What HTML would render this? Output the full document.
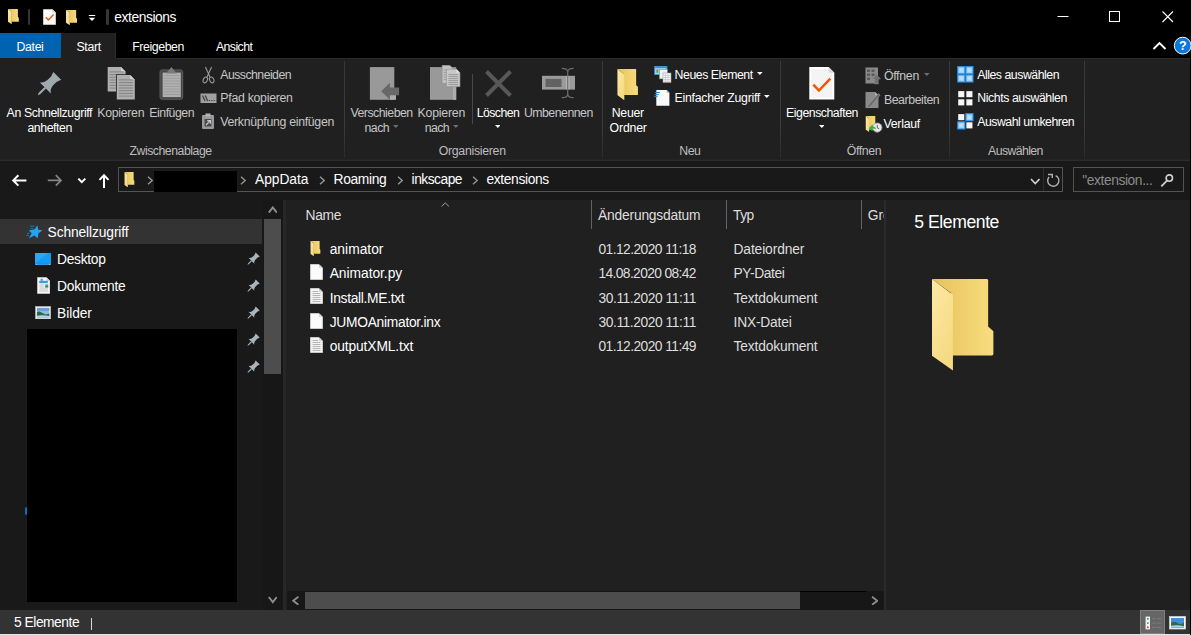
<!DOCTYPE html>
<html lang="de"><head><meta charset="utf-8"><title>extensions</title><style>
html,body{margin:0;padding:0;background:#000}
body{width:1191px;height:635px;position:relative;overflow:hidden;font-family:"Liberation Sans",sans-serif}
.b{position:absolute;display:block}
.t{position:absolute;white-space:nowrap;display:block}
</style></head><body>
<svg width="0" height="0" style="position:absolute"><defs>
<linearGradient id="fb" x1="0" y1="0" x2="1" y2="0"><stop offset="0" stop-color="#e6c35a"/><stop offset="1" stop-color="#f8dc7e"/></linearGradient>
<linearGradient id="ff" x1="0" y1="0" x2="0.6" y2="1"><stop offset="0" stop-color="#fde9a6"/><stop offset="1" stop-color="#f6da82"/></linearGradient>
<symbol id="folder" viewBox="0 0 62 93"><path d="M0,0H54.3Q55.8,0 55.8,1.5V47.8L61,52.6V75.3Q61,76.8 59.5,76.8H19V14Z" fill="url(#fb)"/><path d="M0,0L20.8,15.7V91.9L0,77.1Z" fill="url(#ff)"/></symbol>
<symbol id="pin" viewBox="-14 -14 28 28"><g transform="rotate(45)"><path d="M-5.3,-13.3H5.3L3.7,-8.6V-4Q4,1 7.7,3.1H-7.7Q-4,1 -3.7,-4V-8.6Z"/><path d="M-1,3H1V11L0,13.3L-1,11Z"/></g></symbol>
<symbol id="page" viewBox="0 0 13 16"><path d="M0.5,0.5H9L12.5,4V15.5H0.5Z" fill="#fbfbfb" stroke="#c9c9c9" stroke-width="1"/><path d="M9,0.5V4H12.5Z" fill="#d9d9d9"/></symbol>
<symbol id="txt" viewBox="0 0 13 16"><path d="M0.5,0.5H9L12.5,4V15.5H0.5Z" fill="#f4f4f4" stroke="#c9c9c9" stroke-width="1"/><path d="M9,0.5V4H12.5Z" fill="#cfcfcf"/><path d="M2.5,3.5H8M2.5,5.5H10.5M2.5,7.5H10.5M2.5,9.5H10.5M2.5,11.5H10.5M2.5,13.5H10.5" stroke="#b4b4b4" stroke-width="1"/></symbol>
</defs></svg>
<div class="b" style="left:0px;top:0px;width:1191px;height:58px;background:#000;"></div>
<div class="b" style="left:0px;top:33px;width:61px;height:25px;background:#0063b1;"></div>
<div class="b" style="left:61px;top:33px;width:55px;height:25px;background:#202020;"></div>
<div class="b" style="left:0px;top:58px;width:1190px;height:102px;background:#202020;"></div>
<div class="b" style="left:116px;top:58px;width:1074px;height:1px;background:#2b2b2b;"></div>
<div class="b" style="left:115px;top:33px;width:1px;height:25px;background:#2b2b2b;"></div>
<div class="b" style="left:0px;top:159px;width:1190px;height:1px;background:#242424;"></div>
<div class="b" style="left:0px;top:160px;width:1190px;height:1px;background:#2b2b2b;"></div>
<div class="b" style="left:0px;top:161px;width:1190px;height:39px;background:#191919;"></div>
<div class="b" style="left:0px;top:200px;width:284px;height:410px;background:#191919;"></div>
<div class="b" style="left:263px;top:200px;width:20px;height:410px;background:#171717;"></div>
<div class="b" style="left:283px;top:200px;width:3px;height:410px;background:#272727;"></div>
<div class="b" style="left:286px;top:200px;width:598px;height:410px;background:#202020;"></div>
<div class="b" style="left:286.5px;top:591px;width:597.5px;height:19px;background:#171717;"></div>
<div class="b" style="left:884px;top:200px;width:2px;height:410px;background:#2a2a2a;"></div>
<div class="b" style="left:886px;top:200px;width:304px;height:410px;background:#202020;"></div>
<div class="b" style="left:0px;top:610px;width:1190px;height:24px;background:#333;"></div>
<div class="b" style="left:0px;top:634px;width:1190px;height:1px;background:#e6e6e6;"></div>
<div class="b" style="left:1190px;top:0px;width:1px;height:635px;background:#000;"></div>
<svg class="b" style="left:8px;top:8.9px;" width="11" height="15.4" viewBox="0 0 62 93" preserveAspectRatio="none"><use href="#folder"/></svg>
<div class="b" style="left:27.9px;top:9px;width:2.6px;height:16px;background:#363636;border-radius:1.3px"></div>
<svg class="b" style="left:43px;top:9px;" width="13" height="16" viewBox="0 0 13 16"><path d="M0.2,0.2H9.4L12.8,3.6V15.7H0.2Z" fill="#fcfcfc"/><path d="M9.4,0.2V3.6H12.8Z" fill="#cfcfcf"/><path d="M2.8,8.3L5.4,11L10.6,5.6" fill="none" stroke="#f25500" stroke-width="1.4"/></svg>
<svg class="b" style="left:66px;top:9.8px;" width="11.3" height="15.4" viewBox="0 0 62 93" preserveAspectRatio="none"><use href="#folder"/></svg>
<svg class="b" style="left:88px;top:14px;" width="8" height="8" viewBox="0 0 8 8"><path d="M0.8,1.5H7.2" stroke="#fff" stroke-width="1"/><path d="M0.8,3.8H7.2L4,7Z" fill="#fff"/></svg>
<div class="b" style="left:106.2px;top:9px;width:2.6px;height:16px;background:#363636;border-radius:1.3px"></div>
<svg class="b" style="left:1056px;top:9.5px;" width="14" height="14" viewBox="0 0 14 14"><path d="M1.5,6.5H12.5" stroke="#fff" stroke-width="1"/></svg>
<svg class="b" style="left:1108px;top:9.5px;" width="14" height="14" viewBox="0 0 14 14"><rect x="1.5" y="1.5" width="10" height="10" fill="none" stroke="#fff" stroke-width="1"/></svg>
<svg class="b" style="left:1161px;top:9.5px;" width="14" height="14" viewBox="0 0 14 14"><path d="M1.5,1.5L12,12M12,1.5L1.5,12" stroke="#fff" stroke-width="1.1"/></svg>
<svg class="b" style="left:1152px;top:41px;" width="15" height="10" viewBox="0 0 15 10"><path d="M1.5,8L7.5,2L13.5,8" fill="none" stroke="#fff" stroke-width="1.9"/></svg>
<svg class="b" style="left:1173px;top:36px;" width="18" height="20" viewBox="0 0 18 20"><circle cx="9.7" cy="9.6" r="8.4" fill="#0b79dc" stroke="#fff" stroke-width="1"/><text x="9.7" y="14.2" text-anchor="middle" font-family="Liberation Sans, sans-serif" font-weight="bold" font-size="12.5" fill="#fff">?</text></svg>
<div class="b" style="left:344px;top:61px;width:1px;height:97px;background:linear-gradient(#383838 0%,#3c3c3c 70%,#2a2a2a 100%);"></div>
<div class="b" style="left:602px;top:61px;width:1px;height:97px;background:linear-gradient(#383838 0%,#3c3c3c 70%,#2a2a2a 100%);"></div>
<div class="b" style="left:780px;top:61px;width:1px;height:97px;background:linear-gradient(#383838 0%,#3c3c3c 70%,#2a2a2a 100%);"></div>
<div class="b" style="left:949px;top:61px;width:1px;height:97px;background:linear-gradient(#383838 0%,#3c3c3c 70%,#2a2a2a 100%);"></div>
<div class="b" style="left:1084px;top:61px;width:1px;height:97px;background:linear-gradient(#383838 0%,#3c3c3c 70%,#2a2a2a 100%);"></div>
<div class="b" style="left:472px;top:74px;width:1px;height:50px;background:#484848;"></div>
<svg class="b" style="left:32.8px;top:70.9px;" width="29" height="29" viewBox="0 0 28 28"><use href="#pin" fill="#9fa9b0"/></svg>
<svg class="b" style="left:107px;top:67px;" width="28" height="33" viewBox="0 0 28 33"><path d="M0.7,0.1H13.999999999999998L18.599999999999998,4.699999999999999V24.5H0.7Z" fill="#b0b0b0"/><path d="M13.999999999999998,0.1V4.699999999999999H18.599999999999998Z" fill="#d2d2d2"/><path d="M2.7,4.9H16.599999999999998M2.7,7.6H16.599999999999998M2.7,10.3H16.599999999999998M2.7,13.0H16.599999999999998M2.7,15.7H16.599999999999998M2.7,18.4H16.599999999999998M2.7,21.1H16.599999999999998" stroke="#7c7c7c" stroke-width="0.9"/><path d="M9,7.3H28V33H9Z" fill="#202020"/><path d="M9.8,8.1H23.200000000000003L27.8,12.7V32.5H9.8Z" fill="#b0b0b0"/><path d="M23.200000000000003,8.1V12.7H27.8Z" fill="#d2d2d2"/><path d="M11.8,12.9H25.8M11.8,15.6H25.8M11.8,18.3H25.8M11.8,21.0H25.8M11.8,23.7H25.8M11.8,26.4H25.8M11.8,29.1H25.8" stroke="#7c7c7c" stroke-width="0.9"/></svg>
<svg class="b" style="left:159px;top:66px;" width="25" height="35" viewBox="0 0 25 35"><rect x="1" y="3.9" width="22.7" height="29.4" rx="2" fill="#474747" stroke="#5c5c5c"/><rect x="3.6" y="6.6" width="18.2" height="24.5" fill="#b0b0b0"/><path d="M6.8,7.6L10.4,3.6L12.4,1.1L14.4,3.6L18,7.6Z" fill="#7a7a7a"/><path d="M4.6,9.6H20.8M4.6,12.3H20.8M4.6,15.0H20.8M4.6,17.7H20.8M4.6,20.4H20.8M4.6,23.1H20.8M4.6,25.8H20.8M4.6,28.5H20.8" stroke="#9a9a9a" stroke-width="0.9"/></svg>
<svg class="b" style="left:202px;top:66px;" width="13" height="18" viewBox="0 0 13 18"><path d="M3.4,0.9L8.1,11.2M9.6,0.9L4.9,11.2" stroke="#9a9a9a" stroke-width="1.1" fill="none"/><ellipse cx="3.3" cy="13.9" rx="2" ry="3" transform="rotate(24 3.3 13.9)" fill="none" stroke="#9a9a9a" stroke-width="1.1"/><ellipse cx="9.7" cy="13.9" rx="2" ry="3" transform="rotate(-24 9.7 13.9)" fill="none" stroke="#9a9a9a" stroke-width="1.1"/></svg>
<svg class="b" style="left:200px;top:93px;" width="17" height="11" viewBox="0 0 17 11"><rect x="0.5" y="0.5" width="16" height="9.5" fill="#a0a0a0"/><path d="M2.5,2.5L5,8M5.2,2.5L7.7,8" stroke="#3c3c3c" stroke-width="1.2"/><path d="M8.8,7.5H10M11.2,7.5H12.4M13.6,7.5H14.8" stroke="#3c3c3c" stroke-width="1.2"/></svg>
<svg class="b" style="left:201px;top:113px;" width="14" height="17" viewBox="0 0 14 17"><rect x="1" y="2" width="12" height="14" rx="1" fill="#9a9a9a"/><rect x="4.5" y="0.5" width="5" height="3" fill="#b5b5b5"/><rect x="3.5" y="6" width="7" height="7.5" fill="#4a4a4a"/><path d="M5,12L8.8,8.2M6.2,7.6H9.4V10.8" stroke="#c8c8c8" stroke-width="1.2" fill="none"/></svg>
<svg class="b" style="left:369px;top:66px;" width="31" height="35" viewBox="0 0 31 35"><rect x="0.9" y="1.1" width="24.4" height="32.7" fill="#999"/><rect x="21" y="29" width="6" height="4.8" fill="#ababab"/><path d="M12.2,25.2L20.9,16.7V21.4H30.1V29.3H20.9V33.8Z" fill="#686868"/></svg>
<svg class="b" style="left:429px;top:65px;" width="32" height="36" viewBox="0 0 32 36"><rect x="1" y="2.1" width="26.2" height="32.7" fill="#999"/><rect x="24" y="22" width="3.2" height="12.8" fill="#adadad"/><path d="M13.1,0.2H20.7L23.7,3.2V18.4H13.1Z" fill="#c4c4c4" stroke="#8a8a8a" stroke-width="0.6"/><path d="M14.6,5H17M14.6,7.4H17M14.6,9.8H17M14.6,12.2H17M14.6,14.6H17" stroke="#909090" stroke-width="0.8"/><path d="M17.4,4.1H27.3L31,7.8V21.7H17.4Z" fill="#c8c8c8" stroke="#8a8a8a" stroke-width="0.6"/><path d="M27.3,4.1V7.8H31Z" fill="#e0e0e0"/><path d="M19.4,9.6H29M19.4,11.6H29M19.4,13.6H29M19.4,15.6H29M19.4,17.6H29M19.4,19.6H29" stroke="#8c8c8c" stroke-width="0.8"/></svg>
<svg class="b" style="left:484px;top:69px;" width="29" height="29" viewBox="0 0 29 29"><path d="M2.5,2.5L26.5,26.5M26.5,2.5L2.5,26.5" stroke="#585858" stroke-width="4"/></svg>
<svg class="b" style="left:541px;top:67px;" width="35" height="32" viewBox="0 0 35 32"><rect x="1" y="8.8" width="33" height="13.8" fill="#9a9a9a"/><rect x="4.5" y="11.9" width="16" height="8.1" fill="#626262"/><path d="M26.7,9V22.4" stroke="#b4b4b4" stroke-width="3.6"/><path d="M20.8,1.3Q26.7,1.3 26.7,5Q26.7,1.3 32.6,1.3M20.8,30.7Q26.7,30.7 26.7,27Q26.7,30.7 32.6,30.7" fill="none" stroke="#6c6c6c" stroke-width="1.2"/><path d="M26.7,4.5V27.5" stroke="#6c6c6c" stroke-width="1.2"/></svg>
<svg class="b" style="left:616.5px;top:69px;" width="21.5" height="31.5" viewBox="0 0 62 93"><use href="#folder"/></svg>
<svg class="b" style="left:654px;top:66px;" width="18" height="18" viewBox="0 0 18 18"><rect x="0.7" y="0.3" width="12.2" height="8.3" fill="#a5d3f8" stroke="#4a92dc" stroke-width="0.8"/><rect x="0.7" y="0.3" width="12.2" height="1.8" fill="#3f8de0"/><rect x="2.4" y="4" width="1.8" height="2.8" fill="#4da04a"/><rect x="2.4" y="3" width="1.8" height="1.2" fill="#e8953a"/><rect x="5.4" y="3.4" width="7.9" height="9.5" fill="#f3f3f3" stroke="#8a8a8a" stroke-width="0.6"/><rect x="9" y="7" width="8" height="9.4" fill="#fff" stroke="#9a9a9a" stroke-width="0.6"/><path d="M9.6,9.4H16.4M9.6,11.4H16.4M9.6,13.4H16.4M9.6,15.2H16.4" stroke="#f0a3ab" stroke-width="0.7"/><path d="M11.4,8V16M14,8V16" stroke="#a9cbf2" stroke-width="0.8"/></svg>
<svg class="b" style="left:653px;top:89px;" width="18" height="18" viewBox="0 0 18 18"><path d="M3.3,0.9H13.6L16.4,3.7V16.8H3.3Z" fill="#fafafa"/><path d="M13.6,0.9V3.7H16.4Z" fill="#b8b8b8"/><path d="M2.2,3.5H6.8M1.6,5.4H5.8M1,7.3H4.8" stroke="#2a86d8" stroke-width="1"/></svg>
<svg class="b" style="left:809px;top:66px;" width="26" height="34" viewBox="0 0 26 34"><path d="M0.3,0.9H19.6L25.3,6.8V33.6H0.3Z" fill="#fff"/><path d="M2.2,3H18.6L23.4,7.8V31.6H2.2Z" fill="#f4f4f5"/><path d="M19.6,0.9V6.8H25.3Z" fill="#d8d8d8"/><path d="M4.3,18.6L9.9,24.5L21.3,12.7" fill="none" stroke="#f25500" stroke-width="2.5"/></svg>
<svg class="b" style="left:865px;top:67px;" width="16" height="18" viewBox="0 0 16 18"><rect x="0.5" y="0.5" width="12.5" height="16" fill="#8a8a8a"/><path d="M2,2.5H5V5H2ZM2,6.5H5V9H2ZM2,10.5H5V13H2ZM6.5,2.5H9.5V5H6.5ZM6.5,6.5H9.5V9H6.5Z" fill="#5a5a5a"/><path d="M11.5,7.5L15.5,12H13.3V17H9.7V12H7.5Z" fill="#707070" stroke="#8a8a8a" stroke-width="0.5"/></svg>
<svg class="b" style="left:865px;top:91px;" width="16" height="18" viewBox="0 0 16 18"><path d="M0.5,1H10L13.5,4.5V17H0.5Z" fill="#8a8a8a"/><path d="M10,1V4.5H13.5Z" fill="#b0b0b0"/><path d="M3,14.5L13.5,2.5L15.2,4L5,16L2.6,16.8Z" fill="#6a6a6a" stroke="#9a9a9a" stroke-width="0.5"/></svg>
<svg class="b" style="left:865px;top:115px;" width="18" height="19" viewBox="0 0 18 19"><g transform="translate(0.5,1) scale(0.175)"><use href="#folder" width="62" height="93"/></g><circle cx="12.3" cy="12.6" r="4.6" fill="#e9e9e9" stroke="#9a9a9a" stroke-width="0.8"/><path d="M12.3,10V12.8L14.2,13.8" fill="none" stroke="#555" stroke-width="0.9"/><path d="M3.6,13.2L7.6,9.4V11.4Q10.5,11.4 11.2,14.2Q9.8,13.4 7.6,13.6V16.2Z" fill="#32b24a"/></svg>
<svg class="b" style="left:957px;top:66px;" width="17" height="17" viewBox="0 0 17 17"><rect x="0.20" y="0.10" width="8.15" height="8.2" fill="#2f97f1"/><rect x="1.40" y="1.30" width="5.75" height="5.8" fill="#a3d3fb"/><rect x="2.60" y="2.50" width="3.3" height="3.3" fill="#b9defd"/><rect x="8.35" y="0.10" width="8.15" height="8.2" fill="#2f97f1"/><rect x="9.55" y="1.30" width="5.75" height="5.8" fill="#a3d3fb"/><rect x="10.75" y="2.50" width="3.3" height="3.3" fill="#b9defd"/><rect x="0.20" y="8.30" width="8.15" height="8.2" fill="#2f97f1"/><rect x="1.40" y="9.50" width="5.75" height="5.8" fill="#a3d3fb"/><rect x="2.60" y="10.70" width="3.3" height="3.3" fill="#b9defd"/><rect x="8.35" y="8.30" width="8.15" height="8.2" fill="#2f97f1"/><rect x="9.55" y="9.50" width="5.75" height="5.8" fill="#a3d3fb"/><rect x="10.75" y="10.70" width="3.3" height="3.3" fill="#b9defd"/></svg>
<svg class="b" style="left:957px;top:89.9px;" width="17" height="17" viewBox="0 0 17 17"><rect x="1.20" y="1.10" width="6.1" height="6.1" fill="#f6f6f6"/><rect x="9.35" y="1.10" width="6.1" height="6.1" fill="#f6f6f6"/><rect x="1.20" y="9.30" width="6.1" height="6.1" fill="#f6f6f6"/><rect x="9.35" y="9.30" width="6.1" height="6.1" fill="#f6f6f6"/></svg>
<svg class="b" style="left:957px;top:113.1px;" width="17" height="17" viewBox="0 0 17 17"><rect x="1.20" y="1.10" width="6.1" height="6.1" fill="#f6f6f6"/><rect x="8.35" y="0.10" width="8.15" height="8.2" fill="#2f97f1"/><rect x="9.55" y="1.30" width="5.75" height="5.8" fill="#a3d3fb"/><rect x="10.75" y="2.50" width="3.3" height="3.3" fill="#b9defd"/><rect x="0.20" y="8.30" width="8.15" height="8.2" fill="#2f97f1"/><rect x="1.40" y="9.50" width="5.75" height="5.8" fill="#a3d3fb"/><rect x="2.60" y="10.70" width="3.3" height="3.3" fill="#b9defd"/><rect x="9.35" y="9.30" width="6.1" height="6.1" fill="#f6f6f6"/></svg>
<svg class="b" style="left:392.5px;top:124.6px;" width="5.6" height="3" viewBox="0 0 5.6 3"><path d="M0,0H5.6L2.8,3Z" fill="#6e6e6e"/></svg>
<svg class="b" style="left:452.6px;top:124.6px;" width="5.6" height="3" viewBox="0 0 5.6 3"><path d="M0,0H5.6L2.8,3Z" fill="#6e6e6e"/></svg>
<svg class="b" style="left:494.6px;top:124.6px;" width="5.6" height="3" viewBox="0 0 5.6 3"><path d="M0,0H5.6L2.8,3Z" fill="#fff"/></svg>
<svg class="b" style="left:818.8px;top:124.6px;" width="5.6" height="3" viewBox="0 0 5.6 3"><path d="M0,0H5.6L2.8,3Z" fill="#fff"/></svg>
<svg class="b" style="left:757px;top:72px;" width="5.6" height="3" viewBox="0 0 5.6 3"><path d="M0,0H5.6L2.8,3Z" fill="#fff"/></svg>
<svg class="b" style="left:764.3px;top:95.3px;" width="5.6" height="3" viewBox="0 0 5.6 3"><path d="M0,0H5.6L2.8,3Z" fill="#fff"/></svg>
<svg class="b" style="left:924px;top:73.2px;" width="5.6" height="3" viewBox="0 0 5.6 3"><path d="M0,0H5.6L2.8,3Z" fill="#6e6e6e"/></svg>
<svg class="b" style="left:11px;top:174px;" width="16" height="13" viewBox="0 0 16 13"><path d="M2,6.4H15.4M7.4,1.2L2.2,6.4L7.4,11.6" fill="none" stroke="#fff" stroke-width="2"/></svg>
<svg class="b" style="left:46.5px;top:174px;" width="16" height="13" viewBox="0 0 16 13"><path d="M0.8,6.4H14M8.8,1.2L14,6.4L8.8,11.6" fill="none" stroke="#858585" stroke-width="1.7"/></svg>
<svg class="b" style="left:76.5px;top:177px;" width="10" height="7" viewBox="0 0 10 7"><path d="M1.3,1.6L4.8,5.1L8.3,1.6" fill="none" stroke="#fff" stroke-width="2"/></svg>
<svg class="b" style="left:98px;top:173px;" width="13" height="16" viewBox="0 0 13 16"><path d="M6,15V2.4M1.5,6.9L6,2.3L10.5,6.9" fill="none" stroke="#fff" stroke-width="2"/></svg>
<div class="b" style="left:118px;top:167px;width:943px;height:23px;border:1px solid #535353;background:#191919"></div>
<div class="b" style="left:1043px;top:168px;width:1px;height:23px;background:#2e2e2e;"></div>
<svg class="b" style="left:124px;top:171.5px;" width="11" height="15.5" viewBox="0 0 62 93"><use href="#folder"/></svg>
<svg class="b" style="left:146.5px;top:175.5px;" width="6.5" height="9" viewBox="0 0 6.5 9"><path d="M1,0.8L5.2,4.5L1,8.2" fill="none" stroke="#9a9a9a" stroke-width="1.3"/></svg>
<svg class="b" style="left:240px;top:175.5px;" width="6.5" height="9" viewBox="0 0 6.5 9"><path d="M1,0.8L5.2,4.5L1,8.2" fill="none" stroke="#9a9a9a" stroke-width="1.3"/></svg>
<svg class="b" style="left:318.5px;top:175.5px;" width="6.5" height="9" viewBox="0 0 6.5 9"><path d="M1,0.8L5.2,4.5L1,8.2" fill="none" stroke="#9a9a9a" stroke-width="1.3"/></svg>
<svg class="b" style="left:396.5px;top:175.5px;" width="6.5" height="9" viewBox="0 0 6.5 9"><path d="M1,0.8L5.2,4.5L1,8.2" fill="none" stroke="#9a9a9a" stroke-width="1.3"/></svg>
<svg class="b" style="left:472px;top:175.5px;" width="6.5" height="9" viewBox="0 0 6.5 9"><path d="M1,0.8L5.2,4.5L1,8.2" fill="none" stroke="#9a9a9a" stroke-width="1.3"/></svg>
<div class="b" style="left:154px;top:171px;width:83px;height:21px;background:#000;"></div>
<svg class="b" style="left:1029.5px;top:177.5px;" width="10.5" height="7.5" viewBox="0 0 10.5 7.5"><path d="M1,1L5.2,5.6L9.5,1" fill="none" stroke="#d0d0d0" stroke-width="1.6"/></svg>
<svg class="b" style="left:1046px;top:173px;" width="15" height="15" viewBox="0 0 15 15"><path d="M9.67,2.52A5.6,5.6 0 1 1 3.01,4" fill="none" stroke="#b0b0b0" stroke-width="1.4"/><path d="M2,1.5H6.3V5" fill="none" stroke="#b0b0b0" stroke-width="1.4"/></svg>
<div class="b" style="left:1073px;top:167px;width:109px;height:23px;border:1px solid #535353;background:#191919"></div>
<svg class="b" style="left:1160px;top:174px;" width="14" height="14" viewBox="0 0 14 14"><circle cx="9.3" cy="4.1" r="3.2" fill="none" stroke="#d0d0d0" stroke-width="1.6"/><path d="M7,6.6L1.3,12.4" stroke="#d0d0d0" stroke-width="1.8"/></svg>
<div class="b" style="left:0px;top:219px;width:262.4px;height:25px;background:#333;"></div>
<svg class="b" style="left:26px;top:224px;" width="18" height="16" viewBox="0 0 18 16"><path d="M11.4,1.3L12.3,5.7L16.5,6.3L12.5,9.2L11.6,14.3L8.3,11.6L2.8,14.5L5.7,9.2L2.8,6.6L8.6,5.2Z" fill="#22a4f4"/><path d="M4.1,2.2H8.6M4.4,4.4H7.2M1,9.4H3.5M0.2,11.4H2.8" stroke="#1a7fc4" stroke-width="0.9"/></svg>
<svg class="b" style="left:35px;top:253px;" width="16.2" height="12.4" viewBox="0 0 16.2 12.4"><rect x="0" y="0" width="16.2" height="12.2" fill="#149cf2"/><path d="M0,10V0H13Z" fill="#3db0f8" opacity="0.55"/><rect x="0" y="10" width="16.2" height="2.2" fill="#0f86dc"/><path d="M0.8,11.2H2.4M13.6,11.2H15.4" stroke="#cfeafd" stroke-width="0.8"/><path d="M3,11.2H13" stroke="#5cb6f2" stroke-width="0.6"/></svg>
<svg class="b" style="left:36.5px;top:277px;" width="13.5" height="17" viewBox="0 0 13.5 17"><path d="M0.5,0.5H9.5L13,4V16.5H0.5Z" fill="#f7f7f7" stroke="#bdbdbd" stroke-width="0.9"/><path d="M9.5,0.5V4H13Z" fill="#cfcfcf"/><rect x="2.2" y="3.8" width="8.6" height="2.4" fill="#3b9be8"/><rect x="3.6" y="1.8" width="2.2" height="2" fill="#3b9be8"/><path d="M2.3,8H7.4M2.3,10H7.4M2.3,12H11M2.3,14H11" stroke="#b4b4b4" stroke-width="0.8"/><rect x="8.2" y="7.4" width="3" height="3" fill="#5b93c9"/><path d="M8.2,10.4V9.2L9.6,8.4L11.2,9.4V10.4Z" fill="#4c8a55"/></svg>
<svg class="b" style="left:35px;top:305.5px;" width="16.2" height="13.4" viewBox="0 0 16.2 13.4"><rect x="0.4" y="0.4" width="15.4" height="12.6" fill="#fafafa" stroke="#a8a8a8" stroke-width="0.8"/><rect x="1.9" y="1.9" width="12.4" height="9.4" fill="#8fb9e4"/><rect x="1.9" y="1.9" width="12.4" height="3" fill="#6d9fd6"/><path d="M1.9,11.3V6.2Q4,4.6 6.6,6.6T11,8.4L14.3,7.6V11.3Z" fill="#2f6848"/><path d="M1.9,11.3V9.8Q7,8.4 14.3,10V11.3Z" fill="#b4d4e8"/></svg>
<div class="b" style="left:27px;top:329px;width:210px;height:273px;background:#000;"></div>
<div class="b" style="left:25px;top:507px;width:2px;height:8px;background:#0a6fd0;border-radius:2px 0 0 2px"></div>
<svg class="b" style="left:245.4px;top:252.2px;" width="15.2" height="15.2" viewBox="0 0 28 28"><use href="#pin" fill="#a9b3ba"/></svg>
<svg class="b" style="left:245.4px;top:279.2px;" width="15.2" height="15.2" viewBox="0 0 28 28"><use href="#pin" fill="#a9b3ba"/></svg>
<svg class="b" style="left:245.4px;top:306.2px;" width="15.2" height="15.2" viewBox="0 0 28 28"><use href="#pin" fill="#a9b3ba"/></svg>
<svg class="b" style="left:245.4px;top:333.2px;" width="15.2" height="15.2" viewBox="0 0 28 28"><use href="#pin" fill="#a9b3ba"/></svg>
<svg class="b" style="left:245.4px;top:360.2px;" width="15.2" height="15.2" viewBox="0 0 28 28"><use href="#pin" fill="#a9b3ba"/></svg>
<div class="b" style="left:264px;top:219px;width:17.2px;height:155px;background:#4d4d4d;"></div>
<svg class="b" style="left:267.7px;top:206px;" width="9.6" height="7.5" viewBox="0 0 9.6 7.5"><path d="M0.8,6.6L4.8,1.4L8.8,6.6" fill="none" stroke="#8c8c8c" stroke-width="1.9"/></svg>
<svg class="b" style="left:267.7px;top:596.4px;" width="9.6" height="7.5" viewBox="0 0 9.6 7.5"><path d="M0.8,1L4.8,6.2L8.8,1" fill="none" stroke="#8c8c8c" stroke-width="1.9"/></svg>
<div class="b" style="left:591px;top:200px;width:1px;height:29px;background:#636363;"></div>
<div class="b" style="left:726px;top:200px;width:1px;height:29px;background:#636363;"></div>
<div class="b" style="left:861px;top:200px;width:1px;height:29px;background:#636363;"></div>
<svg class="b" style="left:441px;top:201.5px;" width="8.5" height="5" viewBox="0 0 8.5 5"><path d="M0.6,4.4L4.25,0.9L7.9,4.4" fill="none" stroke="#a0a0a0" stroke-width="1"/></svg>
<div class="b" style="left:862px;top:205px;width:22px;height:22px;overflow:hidden"><span class="t" style="left:5.7px;top:3px;font-size:13.8px;line-height:15px;color:#dedede">Größe</span></div>
<svg class="b" style="left:310px;top:241px;" width="11" height="15.5" viewBox="0 0 62 93"><use href="#folder"/></svg>
<svg class="b" style="left:310px;top:264px;" width="13" height="16" viewBox="0 0 13 16"><use href="#page"/></svg>
<svg class="b" style="left:310px;top:288.3px;" width="13" height="16" viewBox="0 0 13 16"><use href="#txt"/></svg>
<svg class="b" style="left:310px;top:312.7px;" width="13" height="16" viewBox="0 0 13 16"><use href="#page"/></svg>
<svg class="b" style="left:310px;top:337px;" width="13" height="16" viewBox="0 0 13 16"><use href="#txt"/></svg>
<div class="b" style="left:305px;top:592px;width:494.5px;height:16.6px;background:#4d4d4d;"></div>
<div class="b" style="left:799.5px;top:591px;width:66px;height:1px;background:#000;"></div>
<svg class="b" style="left:291.9px;top:595.5px;" width="7.5" height="9.6" viewBox="0 0 7.5 9.6"><path d="M6.4,0.8L1.2,4.8L6.4,8.8" fill="none" stroke="#8c8c8c" stroke-width="1.9"/></svg>
<svg class="b" style="left:870.5px;top:595.5px;" width="7.5" height="9.6" viewBox="0 0 7.5 9.6"><path d="M1.1,0.8L6.3,4.8L1.1,8.8" fill="none" stroke="#8c8c8c" stroke-width="1.9"/></svg>
<svg class="b" style="left:932px;top:278.6px;" width="62.4" height="92.6" viewBox="0 0 62 93" preserveAspectRatio="none"><use href="#folder"/></svg>
<div class="b" style="left:90.5px;top:618px;width:1.5px;height:11.5px;background:#d8d8d8;"></div>
<div class="b" style="left:1140px;top:610px;width:23px;height:22px;border:1px solid #808080;background:#666"></div>
<svg class="b" style="left:1145px;top:616px;" width="18" height="14" viewBox="0 0 18 14"><rect x="0.6" y="0.6" width="4.4" height="12.8" fill="#f2f2f2"/><rect x="2" y="2" width="1.6" height="1.6" fill="#2a7fd0"/><rect x="2" y="6.3" width="1.6" height="1.6" fill="#5a9a3a"/><rect x="2" y="10.5" width="1.6" height="1.6" fill="#d03a2a"/><path d="M7,2.8H11M12,2.8H16M7,7.1H11M12,7.1H16M7,11.3H11M12,11.3H16" stroke="#7c7c7c" stroke-width="1"/></svg>
<svg class="b" style="left:1169px;top:616px;" width="17" height="13.5" viewBox="0 0 17 13.5"><rect x="0.5" y="0.5" width="16" height="12.5" fill="#fafafa" stroke="#d0d0d0" stroke-width="0.8"/><rect x="2" y="2" width="13" height="9.5" fill="#3f8fe0"/><path d="M2,11.5V7Q5.5,4.6 8.5,7T15,6.4V11.5Z" fill="#2f6b4a"/><path d="M2,11.5V9.8Q8,8.4 15,10.2V11.5Z" fill="#a8d0e6"/></svg>
<span class="t" style="left:114.3px;top:10px;font-size:13.8px;line-height:15px;color:#ffffff;letter-spacing:-0.427px;">extensions</span>
<span class="t" style="left:16.6px;top:40px;font-size:12.3px;line-height:14px;color:#ffffff;letter-spacing:-0.364px;">Datei</span>
<span class="t" style="left:76.4px;top:40px;font-size:12.3px;line-height:14px;color:#ffffff;letter-spacing:-0.317px;">Start</span>
<span class="t" style="left:132.2px;top:40px;font-size:12.3px;line-height:14px;color:#ffffff;letter-spacing:-0.397px;">Freigeben</span>
<span class="t" style="left:215.9px;top:40px;font-size:12.3px;line-height:14px;color:#ffffff;letter-spacing:-0.561px;">Ansicht</span>
<span class="t" style="left:6.6px;top:106px;font-size:12.3px;line-height:14px;color:#ffffff;letter-spacing:-0.386px;">An Schnellzugriff</span>
<span class="t" style="left:27.4px;top:121px;font-size:12.3px;line-height:14px;color:#ffffff;letter-spacing:-0.422px;">anheften</span>
<span class="t" style="left:97.3px;top:106px;font-size:12.3px;line-height:14px;color:#c6c6c6;letter-spacing:-0.292px;">Kopieren</span>
<span class="t" style="left:149.3px;top:106px;font-size:12.3px;line-height:14px;color:#c6c6c6;letter-spacing:-0.481px;">Einfügen</span>
<span class="t" style="left:220.3px;top:68px;font-size:12.3px;line-height:14px;color:#c6c6c6;letter-spacing:-0.547px;">Ausschneiden</span>
<span class="t" style="left:220.3px;top:91px;font-size:12.3px;line-height:14px;color:#c6c6c6;letter-spacing:-0.269px;">Pfad kopieren</span>
<span class="t" style="left:220.3px;top:115px;font-size:12.3px;line-height:14px;color:#c6c6c6;letter-spacing:-0.298px;">Verknüpfung einfügen</span>
<span class="t" style="left:129.5px;top:144px;font-size:12.3px;line-height:14px;color:#bdbdbd;letter-spacing:-0.484px;">Zwischenablage</span>
<span class="t" style="left:350.4px;top:106px;font-size:12.3px;line-height:14px;color:#c6c6c6;letter-spacing:-0.490px;">Verschieben</span>
<span class="t" style="left:364.6px;top:121px;font-size:12.3px;line-height:14px;color:#c6c6c6;letter-spacing:-0.568px;">nach</span>
<span class="t" style="left:417.6px;top:106px;font-size:12.3px;line-height:14px;color:#c6c6c6;letter-spacing:-0.229px;">Kopieren</span>
<span class="t" style="left:424.8px;top:121px;font-size:12.3px;line-height:14px;color:#c6c6c6;letter-spacing:-0.618px;">nach</span>
<span class="t" style="left:476.8px;top:106px;font-size:12.3px;line-height:14px;color:#ffffff;letter-spacing:-0.586px;">Löschen</span>
<span class="t" style="left:523.9px;top:106px;font-size:12.3px;line-height:14px;color:#c6c6c6;letter-spacing:-0.494px;">Umbenennen</span>
<span class="t" style="left:438.7px;top:144px;font-size:12.3px;line-height:14px;color:#bdbdbd;letter-spacing:-0.284px;">Organisieren</span>
<span class="t" style="left:611.8px;top:106px;font-size:12.3px;line-height:14px;color:#ffffff;letter-spacing:-0.320px;">Neuer</span>
<span class="t" style="left:609.6px;top:121px;font-size:12.3px;line-height:14px;color:#ffffff;letter-spacing:-0.180px;">Ordner</span>
<span class="t" style="left:674.6px;top:68px;font-size:12.3px;line-height:14px;color:#ffffff;letter-spacing:-0.460px;">Neues Element</span>
<span class="t" style="left:674.6px;top:91px;font-size:12.3px;line-height:14px;color:#ffffff;letter-spacing:-0.271px;">Einfacher Zugriff</span>
<span class="t" style="left:679.2px;top:144px;font-size:12.3px;line-height:14px;color:#bdbdbd;letter-spacing:-0.421px;">Neu</span>
<span class="t" style="left:786.0px;top:106px;font-size:12.3px;line-height:14px;color:#ffffff;letter-spacing:-0.464px;">Eigenschaften</span>
<span class="t" style="left:883.9px;top:69px;font-size:12.3px;line-height:14px;color:#c6c6c6;letter-spacing:-0.267px;">Öffnen</span>
<span class="t" style="left:883.9px;top:93px;font-size:12.3px;line-height:14px;color:#c6c6c6;letter-spacing:-0.408px;">Bearbeiten</span>
<span class="t" style="left:883.5px;top:117px;font-size:12.3px;line-height:14px;color:#ffffff;letter-spacing:-0.257px;">Verlauf</span>
<span class="t" style="left:846.7px;top:144px;font-size:12.3px;line-height:14px;color:#bdbdbd;letter-spacing:-0.351px;">Öffnen</span>
<span class="t" style="left:977.2px;top:68px;font-size:12.3px;line-height:14px;color:#ffffff;letter-spacing:-0.465px;">Alles auswählen</span>
<span class="t" style="left:977.2px;top:91px;font-size:12.3px;line-height:14px;color:#ffffff;letter-spacing:-0.412px;">Nichts auswählen</span>
<span class="t" style="left:977.2px;top:115px;font-size:12.3px;line-height:14px;color:#ffffff;letter-spacing:-0.474px;">Auswahl umkehren</span>
<span class="t" style="left:988.1px;top:144px;font-size:12.3px;line-height:14px;color:#bdbdbd;letter-spacing:-0.619px;">Auswählen</span>
<span class="t" style="left:255.0px;top:172px;font-size:13.8px;line-height:15px;color:#ffffff;letter-spacing:-0.043px;">AppData</span>
<span class="t" style="left:333.5px;top:172px;font-size:13.8px;line-height:15px;color:#ffffff;letter-spacing:-0.331px;">Roaming</span>
<span class="t" style="left:411.6px;top:172px;font-size:13.8px;line-height:15px;color:#ffffff;letter-spacing:-0.509px;">inkscape</span>
<span class="t" style="left:486.4px;top:172px;font-size:13.8px;line-height:15px;color:#ffffff;letter-spacing:-0.347px;">extensions</span>
<span class="t" style="left:1082.3px;top:173px;font-size:13.8px;line-height:15px;color:#8c8c8c;letter-spacing:-0.413px;">&quot;extension...</span>
<span class="t" style="left:47.6px;top:225px;font-size:13.8px;line-height:15px;color:#ffffff;letter-spacing:-0.120px;">Schnellzugriff</span>
<span class="t" style="left:57.1px;top:252px;font-size:13.8px;line-height:15px;color:#ffffff;letter-spacing:-0.304px;">Desktop</span>
<span class="t" style="left:57.1px;top:279px;font-size:13.8px;line-height:15px;color:#ffffff;letter-spacing:-0.240px;">Dokumente</span>
<span class="t" style="left:57.1px;top:306px;font-size:13.8px;line-height:15px;color:#ffffff;letter-spacing:-0.080px;">Bilder</span>
<span class="t" style="left:305.5px;top:208px;font-size:13.8px;line-height:15px;color:#dedede;letter-spacing:-0.328px;">Name</span>
<span class="t" style="left:598.1px;top:208px;font-size:13.8px;line-height:15px;color:#dedede;letter-spacing:-0.200px;">Änderungsdatum</span>
<span class="t" style="left:733.1px;top:208px;font-size:13.8px;line-height:15px;color:#dedede;letter-spacing:-0.517px;">Typ</span>
<span class="t" style="left:329.7px;top:242px;font-size:13.8px;line-height:15px;color:#ffffff;letter-spacing:0.014px;">animator</span>
<span class="t" style="left:329.7px;top:266px;font-size:13.8px;line-height:15px;color:#ffffff;letter-spacing:-0.033px;">Animator.py</span>
<span class="t" style="left:329.7px;top:291px;font-size:13.8px;line-height:15px;color:#ffffff;letter-spacing:-0.312px;">Install.ME.txt</span>
<span class="t" style="left:329.7px;top:315px;font-size:13.8px;line-height:15px;color:#ffffff;letter-spacing:-0.276px;">JUMOAnimator.inx</span>
<span class="t" style="left:329.7px;top:339px;font-size:13.8px;line-height:15px;color:#ffffff;letter-spacing:-0.119px;">outputXML.txt</span>
<span class="t" style="left:598.5px;top:242px;font-size:13.8px;line-height:15px;color:#dedede;letter-spacing:-0.562px;">01.12.2020 11:18</span>
<span class="t" style="left:598.5px;top:266px;font-size:13.8px;line-height:15px;color:#dedede;letter-spacing:-0.626px;">14.08.2020 08:42</span>
<span class="t" style="left:598.5px;top:291px;font-size:13.8px;line-height:15px;color:#dedede;letter-spacing:-0.434px;">30.11.2020 11:11</span>
<span class="t" style="left:598.5px;top:315px;font-size:13.8px;line-height:15px;color:#dedede;letter-spacing:-0.434px;">30.11.2020 11:11</span>
<span class="t" style="left:598.5px;top:339px;font-size:13.8px;line-height:15px;color:#dedede;letter-spacing:-0.562px;">01.12.2020 11:49</span>
<span class="t" style="left:733.5px;top:242px;font-size:13.8px;line-height:15px;color:#dedede;letter-spacing:-0.118px;">Dateiordner</span>
<span class="t" style="left:733.5px;top:266px;font-size:13.8px;line-height:15px;color:#dedede;letter-spacing:-0.369px;">PY-Datei</span>
<span class="t" style="left:733.5px;top:291px;font-size:13.8px;line-height:15px;color:#dedede;letter-spacing:-0.159px;">Textdokument</span>
<span class="t" style="left:733.5px;top:315px;font-size:13.8px;line-height:15px;color:#dedede;letter-spacing:-0.201px;">INX-Datei</span>
<span class="t" style="left:733.5px;top:339px;font-size:13.8px;line-height:15px;color:#dedede;letter-spacing:-0.159px;">Textdokument</span>
<span class="t" style="left:914.2px;top:212px;font-size:17.6px;line-height:20px;color:#ffffff;letter-spacing:-0.420px;">5 Elemente</span>
<span class="t" style="left:14.0px;top:615px;font-size:13.8px;line-height:15px;color:#ffffff;letter-spacing:-0.470px;">5 Elemente</span>
</body></html>
